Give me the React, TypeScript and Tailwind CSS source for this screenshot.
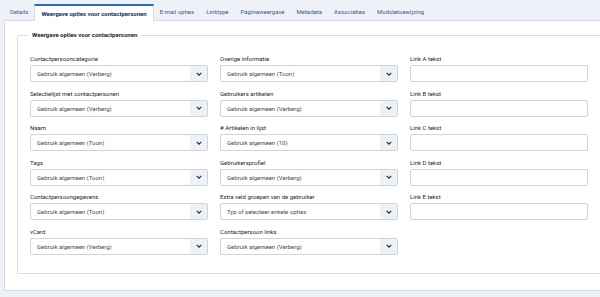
const tabs = [
  "Details",
  "Weergave opties voor contactpersonen",
  "E-mail opties",
  "Linktype",
  "Paginaweergave",
  "Metadata",
  "Associaties",
  "Moduletoewijzing",
];

interface SelectField {
  label: string;
  value: string;
}

const col1: SelectField[] = [
  { label: "Contactpersooncategorie", value: "Gebruik algemeen (Verberg)" },
  { label: "Selectielijst met contactpersonen", value: "Gebruik algemeen (Verberg)" },
  { label: "Naam", value: "Gebruik algemeen (Toon)" },
  { label: "Tags", value: "Gebruik algemeen (Toon)" },
  { label: "Contactpersoongegevens", value: "Gebruik algemeen (Toon)" },
  { label: "vCard", value: "Gebruik algemeen (Verberg)" },
];

const col2: SelectField[] = [
  { label: "Overige informatie", value: "Gebruik algemeen (Toon)" },
  { label: "Gebruikers artikelen", value: "Gebruik algemeen (Verberg)" },
  { label: "# Artikelen in lijst", value: "Gebruik algemeen (10)" },
  { label: "Gebruikersprofiel", value: "Gebruik algemeen (Verberg)" },
  { label: "Extra veld groepen van de gebruiker", value: "Typ of selecteer enkele opties" },
  { label: "Contactpersoon links", value: "Gebruik algemeen (Verberg)" },
];

const col3 = ["Link A tekst", "Link B tekst", "Link C tekst", "Link D tekst", "Link E tekst"];

const Chevron = () => (
  <svg width="6" height="4" viewBox="0 0 6 4" fill="none" stroke="#1f2d3d" strokeWidth={1.1}>
    <path d="M0.7 0.8 3 3.1 5.3 0.8" />
  </svg>
);

const Select = ({ label, value }: SelectField) => (
  <div className="flex flex-col">
    <span className="h-[8px] text-[6px] leading-[8px] text-[#22262a]">{label}</span>
    <div className="mt-[2px] flex h-[17px] items-center rounded-[2px] border border-[#cfd4da] bg-white">
      <span className="flex-1 pl-[6px] text-[6px] text-[#404a55]">{value}</span>
      <div className="flex h-full w-[17px] items-center justify-center bg-[#eef1f5]">
        <Chevron />
      </div>
    </div>
  </div>
);

const TextInput = ({ label }: { label: string }) => (
  <div className="flex flex-col">
    <span className="h-[8px] text-[6px] leading-[8px] text-[#22262a]">{label}</span>
    <div className="mt-[2px] h-[17px] rounded-[2px] border border-[#cfd4da] bg-white" />
  </div>
);

export default function App() {
  return (
    <div
      className="h-[297px] w-[600px] overflow-hidden bg-[#eef2f8]"
      style={{ fontFamily: "Roboto, 'Liberation Sans', sans-serif" }}
    >
      <div className="w-[630px] pl-[4px]">
        {/* Tabs */}
        <div className="flex h-[20px] items-end">
          {tabs.map((t, i) =>
            i === 1 ? (
              <div
                key={t}
                className="relative -mb-px flex h-[17px] items-center border-x border-t-2 border-x-[#d5dbe3] border-t-[#2a69b8] bg-white px-[6px] pb-[1px] text-[6px] font-bold text-[#132f53]"
              >
                {t}
              </div>
            ) : (
              <div
                key={t}
                className="flex h-[17px] items-center px-[6px] pb-[1px] text-[6px] text-[#3d5a80]"
              >
                {t}
              </div>
            )
          )}
        </div>

        {/* Panel */}
        <div className="h-[271px] border border-[#d5dbe3] bg-white pl-[12px] pt-[9px]">
          <fieldset className="w-[600px] rounded-[2px] border border-[#d9dde2] px-[12px] pb-[18px] pt-[15px]">
            <legend className="ml-[-2px] px-[4px] text-[6px] leading-[10px] font-bold text-[#22262a]">
              Weergave opties voor contactpersonen
            </legend>
            <div className="grid grid-cols-[178px_178px_178px] gap-x-[12px]">
              <div className="flex flex-col gap-[7.5px]">
                {col1.map((f) => (
                  <Select key={f.label} {...f} />
                ))}
              </div>
              <div className="flex flex-col gap-[7.5px]">
                {col2.map((f) => (
                  <Select key={f.label} {...f} />
                ))}
              </div>
              <div className="flex flex-col gap-[7.5px]">
                {col3.map((l) => (
                  <TextInput key={l} label={l} />
                ))}
              </div>
            </div>
          </fieldset>
        </div>
      </div>
    </div>
  );
}
